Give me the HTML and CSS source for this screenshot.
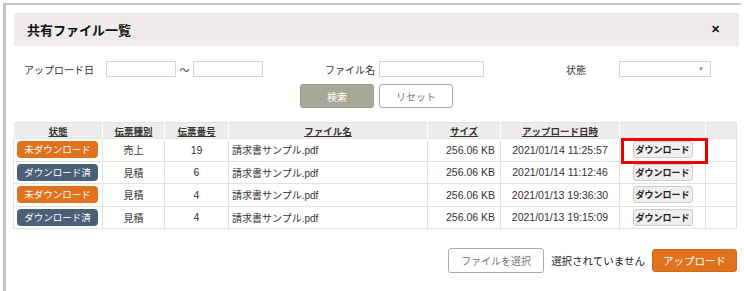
FILE: index.html
```html
<!DOCTYPE html>
<html lang="ja">
<head>
	<meta charset="UTF-8" />
	<title>共有ファイル一覧</title>
	<link rel="stylesheet" href="styles.css">
</head>
<body>
	<div class="frame">
		<header class="modal-head">
			<h1>共有ファイル一覧</h1>
			<span class="close">✕</span>
		</header>

		<div class="filters">
			<label class="lbl lbl-date">アップロード日</label>
			<input class="field field-date" type="text">
			<span class="tilde">～</span>
			<input class="field field-date" type="text">
			<label class="lbl lbl-name">ファイル名</label>
			<input class="field field-name" type="text">
			<label class="lbl lbl-state">状態</label>
			<div class="field field-select"><span class="caret">▼</span></div>
		</div>

		<div class="actions">
			<button class="btn btn-search">検索</button>
			<button class="btn btn-reset">リセット</button>
		</div>

		<table class="files">
			<colgroup>
				<col style="width:89px"><col style="width:62px"><col style="width:64px"><col style="width:199px">
				<col style="width:73px"><col style="width:119px"><col style="width:86px"><col>
			</colgroup>
			<thead>
				<tr>
					<th>状態</th><th>伝票種別</th><th>伝票番号</th><th>ファイル名</th>
					<th>サイズ</th><th>アップロード日時</th><th></th><th class="blank"></th>
				</tr>
			</thead>
			<tbody>
				<tr>
					<td class="c"><span class="badge badge-new">未ダウンロード</span></td>
					<td class="c">売上</td><td class="c num">19</td>
					<td class="fname">請求書サンプル.pdf</td>
					<td class="r num">256.06 KB</td>
					<td class="c num">2021/01/14 11:25:57</td>
					<td class="c dl-cell"><button class="dl">ダウンロード</button><span class="mark"></span></td>
					<td></td>
				</tr>
				<tr>
					<td class="c"><span class="badge badge-done">ダウンロード済</span></td>
					<td class="c">見積</td><td class="c num">6</td>
					<td class="fname">請求書サンプル.pdf</td>
					<td class="r num">256.06 KB</td>
					<td class="c num">2021/01/14 11:12:46</td>
					<td class="c"><button class="dl">ダウンロード</button></td>
					<td></td>
				</tr>
				<tr>
					<td class="c"><span class="badge badge-new">未ダウンロード</span></td>
					<td class="c">見積</td><td class="c num">4</td>
					<td class="fname">請求書サンプル.pdf</td>
					<td class="r num">256.06 KB</td>
					<td class="c num">2021/01/13 19:36:30</td>
					<td class="c"><button class="dl">ダウンロード</button></td>
					<td></td>
				</tr>
				<tr>
					<td class="c"><span class="badge badge-done">ダウンロード済</span></td>
					<td class="c">見積</td><td class="c num">4</td>
					<td class="fname">請求書サンプル.pdf</td>
					<td class="r num">256.06 KB</td>
					<td class="c num">2021/01/13 19:15:09</td>
					<td class="c"><button class="dl">ダウンロード</button></td>
					<td></td>
				</tr>
			</tbody>
		</table>

		<div class="upload">
			<button class="btn btn-file">ファイルを選択</button>
			<span class="nofile">選択されていません</span>
			<button class="btn btn-upload">アップロード</button>
		</div>
	</div>
</body>
</html>
```

FILE: styles.css
```css
* {
	box-sizing: border-box;
}

body {
	margin: 0;
	background: #fff;
	color: #222;
	font-family: "Liberation Sans", "Noto Sans CJK JP", sans-serif;
	font-size: 10px;
	height: 291px;
	overflow: hidden;
}

.frame {
	margin: 3px 0 0 3px;
	width: 738px;
	border-left: 3px solid #c2c2c2;
	border-top: 2px solid #c6c6c6;
	padding: 8px 2px 0 8px;
	height: 300px;
}

.modal-head {
	display: flex;
	align-items: center;
	justify-content: space-between;
	height: 33px;
	background: #eeebea;
	padding: 0 19px 0 13px;
}

.modal-head h1 {
	margin: 0 0 1px;
	font-size: 13px;
	font-weight: bold;
	color: #111;
}

.close {
	font-size: 11px;
	font-weight: bold;
	color: #111;
}

.filters {
	display: flex;
	align-items: center;
	margin-top: 15px;
	height: 16px;
	padding-left: 10px;
	color: #333;
}

.lbl {
	font-size: 10px;
}

.lbl-date { width: 82px; }
.lbl-name { margin-left: 62px; width: 54px; }
.lbl-state { margin-left: 82px; width: 53px; }

.field {
	height: 16px;
	border: 1px solid #d6d6d6;
	background: #fff;
	padding: 0;
}

.field-date { width: 70px; }
.field-name { width: 105px; }

.field-select {
	width: 92px;
	display: flex;
	align-items: center;
	justify-content: flex-end;
	padding-right: 6px;
}

.caret {
	font-size: 6px;
	color: #888;
}

.tilde {
	width: 17px;
	text-align: center;
	font-size: 10px;
}

.actions {
	display: flex;
	justify-content: center;
	gap: 5px;
	margin-top: 7px;
}

.btn {
	font-family: "Liberation Sans", "Noto Sans CJK JP", sans-serif;
	border-radius: 3px;
	cursor: pointer;
}

.btn-search,
.btn-reset {
	width: 74px;
	height: 24px;
	font-size: 10px;
}

.btn-search {
	background: #a8a898;
	border: 1px solid #999989;
	color: #fff;
}

.btn-reset {
	background: #fff;
	border: 1px solid #aaa;
	color: #777;
}

.files {
	margin: 14px 0 0 -1px;
	width: 724px;
	border-collapse: collapse;
	table-layout: fixed;
	border: 1px solid #e2e2e2;
}

.files th {
	height: 16px;
	background: #efedeb;
	font-size: 9.5px;
	font-weight: bold;
	text-decoration: underline;
	color: #333;
	border-left: 1px solid #fff;
	padding: 0;
}

.files td {
	height: 22.5px;
	border: 1px solid #e2e2e2;
	border-top: 1px solid #e6e6e6;
	padding: 0 4px;
	font-size: 10px;
	color: #333;
}

.files td.c { text-align: center; }
.files td.r { text-align: right; padding-right: 5px; }

.num {
	font-size: 10.5px !important;
}

.fname {
	padding-left: 3px !important;
}

.badge {
	display: block;
	height: 17px;
	line-height: 17px;
	margin: 0 0 0 -1px;
	border-radius: 4px;
	color: #fff;
	font-size: 9.5px;
	text-align: center;
}

.badge-new { background: #e0721e; }
.badge-done { background: #4a6079; }

.dl {
	width: 60px;
	height: 17px;
	padding: 0;
	font-family: "Liberation Sans", "Noto Sans CJK JP", sans-serif;
	font-size: 9px;
	font-weight: bold;
	color: #222;
	background: #efefef;
	border: 1px solid #ccc;
	border-radius: 3px;
}

.dl-cell {
	position: relative;
}

.mark {
	position: absolute;
	left: 1px;
	top: -1px;
	width: 87px;
	height: 26px;
	border: 3px solid #ee0000;
}

.upload {
	display: flex;
	justify-content: flex-end;
	align-items: center;
	margin-top: 19px;
	padding-right: 2px;
}

.btn-file {
	width: 96px;
	height: 25px;
	background: #fff;
	border: 1px solid #aaa;
	color: #777;
	font-size: 10px;
}

.nofile {
	margin: 0 7px 0 7px;
	font-size: 10.5px;
	color: #222;
}

.btn-upload {
	width: 85px;
	height: 23px;
	background: #e0721e;
	border: 1px solid #d06818;
	color: #fff;
	font-size: 10.5px;
}
```
